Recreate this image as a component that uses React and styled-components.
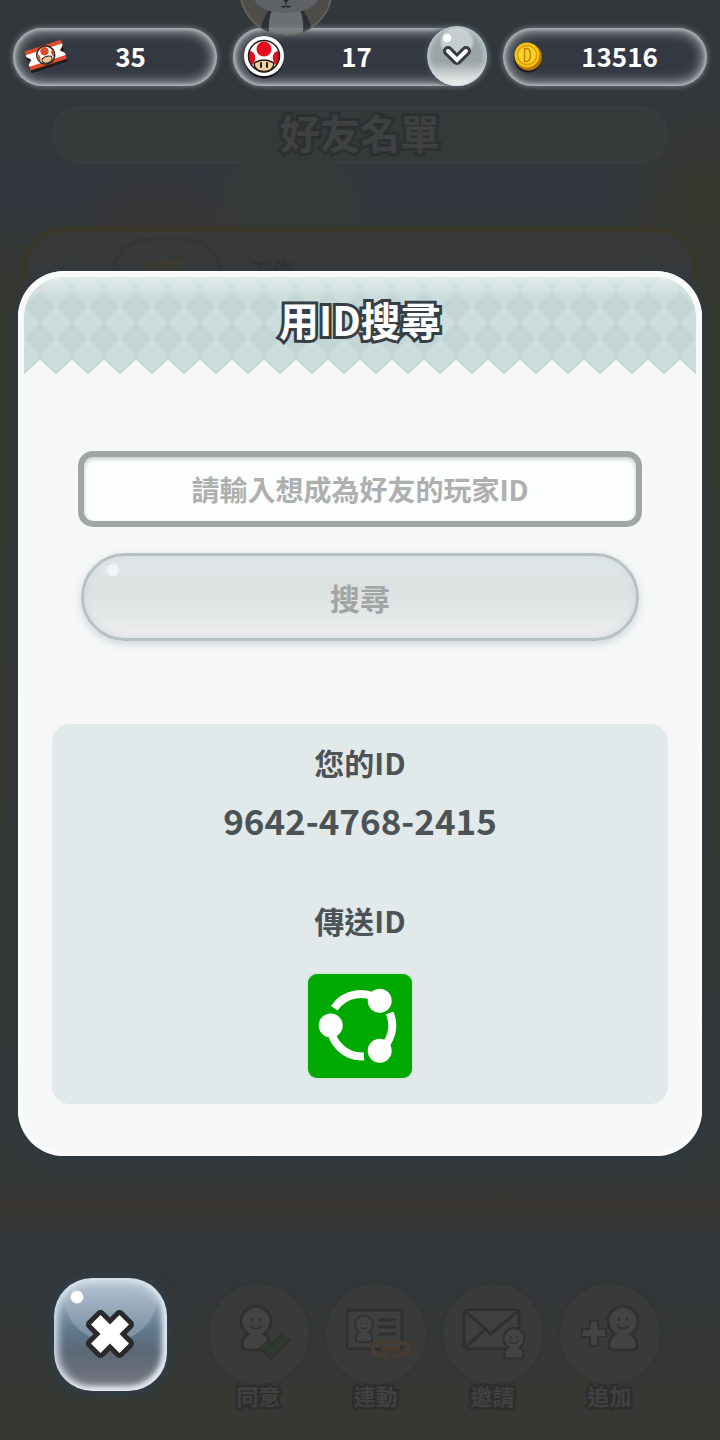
import { useState } from "react";
import styled, { createGlobalStyle } from "styled-components";

const actions = [
  { label: "同意", Icon: ApproveIcon },
  { label: "連動", Icon: LinkIcon },
  { label: "邀請", Icon: InviteIcon },
  { label: "追加", Icon: AddIcon },
];

export default function App() {
  const [friendId, setFriendId] = useState("");

  return (
    <>
      <GlobalStyle />
      <Screen>
        <FriendsPage>
          <PageTitle>好友名單</PageTitle>
          <FriendCard>
            <Avatar>
              <StarIcon />
            </Avatar>
            <FriendName>工作</FriendName>
          </FriendCard>
        </FriendsPage>

        <Foreground>
          <StatusBar>
            <Pill $end="24px">
              <TicketIcon />
              <Count>35</Count>
            </Pill>
            <Pill $end="0">
              <ToadIcon />
              <Count>17</Count>
              <RoundButton type="button" aria-label="展開">
                <ChevronIcon />
              </RoundButton>
            </Pill>
            <Pill $end="12px">
              <CoinIcon />
              <Count>13516</Count>
            </Pill>
          </StatusBar>
          <Mascot>
            <MascotIcon />
          </Mascot>

          <Dialog role="dialog" aria-labelledby="dialog-title">
            <DialogHeader>
              <HeaderPattern />
              <DialogTitle id="dialog-title">用ID搜尋</DialogTitle>
            </DialogHeader>
            <SearchForm onSubmit={(e) => e.preventDefault()}>
              <IdInput
                type="text"
                aria-label="玩家ID"
                placeholder="請輸入想成為好友的玩家ID"
                value={friendId}
                onChange={(e) => setFriendId(e.target.value)}
              />
              <SearchButton type="submit">搜尋</SearchButton>
            </SearchForm>
            <IdPanel>
              <PanelLabel>您的ID</PanelLabel>
              <PlayerId>9642-4768-2415</PlayerId>
              <PanelLabel>傳送ID</PanelLabel>
              <ShareButton type="button" aria-label="傳送ID">
                <ShareIcon />
              </ShareButton>
            </IdPanel>
          </Dialog>

          <BottomBar>
            <CloseButton type="button" aria-label="關閉">
              <CloseIcon />
            </CloseButton>
            <Actions>
              {actions.map(({ label, Icon }) => (
                <Action type="button" key={label}>
                  <ActionDisc>
                    <Icon />
                  </ActionDisc>
                  <ActionLabel>{label}</ActionLabel>
                </Action>
              ))}
            </Actions>
          </BottomBar>
        </Foreground>
      </Screen>
    </>
  );
}

function TicketIcon() {
  return (
    <svg width="44" height="42" viewBox="0 0 44 42" aria-hidden="true">
      <g transform="rotate(-18 22 21)">
        <path d="M3 15h38v5l-3 4 3 4v5H3v-6l3-4-3-4z" fill="#1d1d20" />
        <path d="M3 10h38v6l-4 4 4 4v6H3v-6l4-4-4-4z" fill="#dd4d2b" />
        <path d="M3 14h38v2l-4 4 4 4v2H3v-2l4-4-4-4z" fill="#fff" />
        <circle cx="22" cy="20" r="9" fill="#fff" stroke="#2b2624" strokeWidth="1.5" />
        <circle cx="22" cy="16" r="4.2" fill="#e04a25" />
        <path d="M14 17c2 0 3 4 1 7-2-2-2-5-1-7zM30 17c-2 0-3 4-1 7 2-2 2-5 1-7z" fill="#e04a25" />
        <path d="M17 23q5-3 10 0 1 5-5 5t-5-5z" fill="#efc592" stroke="#2b2624" />
      </g>
    </svg>
  );
}

function ToadIcon() {
  return (
    <svg width="42" height="46" viewBox="0 0 42 46" aria-hidden="true">
      <circle cx="20" cy="26" r="19.5" fill="#191b20" />
      <circle cx="20" cy="23" r="20" fill="#fff" />
      <path d="M6 18c6 1 7 10 2 14-4-4-5-9-2-14zM34 18c-6 1-7 10-2 14 4-4 5-9 2-14z" fill="#e60b1d" />
      <circle cx="20" cy="16" r="7.5" fill="#e60b1d" />
      <path d="M12 29q8-4 16 0 3 1 1 5-3 5-9 5t-9-5q-2-4 1-5z" fill="#f3cfa4" stroke="#241d1a" strokeWidth="1.5" />
      <path d="M17 30v4M23 30v4" stroke="#241d1a" strokeWidth="2" strokeLinecap="round" />
      <circle cx="20" cy="23" r="15.5" fill="none" stroke="#241d1a" strokeWidth="1.5" />
    </svg>
  );
}

function CoinIcon() {
  return (
    <svg width="30" height="36" viewBox="0 0 30 36" aria-hidden="true">
      <circle cx="14" cy="21" r="13.5" fill="#191b20" />
      <circle cx="14.5" cy="19" r="13.5" fill="#b87800" />
      <circle cx="13" cy="17" r="12.5" fill="#f7c60d" />
      <circle cx="13" cy="17" r="9.5" fill="#fbd62a" stroke="#e09a08" strokeWidth="1.5" />
      <path d="M10.500 10.500h3q3 1 3 6.500t-3 6.500h-3z" fill="#f9cf2e" stroke="#c98105" strokeWidth="1.500" />
    </svg>
  );
}

function ChevronIcon() {
  return (
    <svg width="34" height="26" viewBox="0 0 34 26" aria-hidden="true">
      <path d="M8 8l9 9 9-9" fill="none" stroke="#343a3e" strokeWidth="10" strokeLinecap="round" strokeLinejoin="round" />
      <path d="M8 8l9 9 9-9" fill="none" stroke="#fff" strokeWidth="4" strokeLinecap="round" />
    </svg>
  );
}

function MascotIcon() {
  return (
    <svg width="94" height="38" viewBox="0 0 94 38" aria-hidden="true">
      <circle cx="47" cy="-11" r="46" fill="#56534e" stroke="#706a5f" strokeWidth="2" />
      <path d="M32 8h30q8 9 10 20-12 7-25 7T22 28Q24 17 32 8z" fill="#2c2e30" />
      <path d="M33 10h28q4 9 3 22-8 3-17 3t-17-3q-1-13 3-22z" fill="#7a7d82" />
      <path d="M14-20h66q2 18-5 25-10 8-28 8T19 5q-7-7-5-25z" fill="#6b6e72" />
      <path d="M44-1h6l-3 4zM47 3v3M42 6q3 3 5 0q2 3 5 0" fill="#25272a" stroke="#25272a" strokeWidth="1" />
    </svg>
  );
}

function StarIcon() {
  return (
    <svg width="60" height="60" viewBox="0 0 60 60" aria-hidden="true">
      <path d="M24 4l8 4 16-2-6 16 4 20-18-8-20 8 4-20-6-12 12-1z" fill="#443c2c" />
    </svg>
  );
}

function HeaderPattern() {
  return (
    <PatternSvg aria-hidden="true">
      <defs>
        <pattern id="diamonds" y="14" width="32" height="32" patternUnits="userSpaceOnUse">
          <rect width="32" height="32" fill="#cbdddc" />
          <path d="M16 0l16 16-16 16L0 16z" fill="#c3d6d5" />
        </pattern>
        <pattern id="teeth" y="82" width="32" height="16" patternUnits="userSpaceOnUse">
          <path d="M0 0h16L0 15zM16 0h16v15z" fill="#cbdddc" />
          <path d="M0 14L15 0h2l15 14" fill="none" stroke="#c3d7d5" strokeWidth="2" />
        </pattern>
        <linearGradient id="fade" x1="0" y1="0" x2="0" y2="1">
          <stop offset="0" stopColor="#fff" stopOpacity="0.5" />
          <stop offset="1" stopColor="#fff" stopOpacity="0" />
        </linearGradient>
      </defs>
      <rect width="100%" height="82" fill="url(#diamonds)" />
      <rect y="82" width="100%" height="16" fill="url(#teeth)" />
      <rect width="100%" height="20" fill="url(#fade)" />
    </PatternSvg>
  );
}

function ShareIcon() {
  return (
    <svg width="104" height="104" viewBox="0 0 104 104" aria-hidden="true">
      <g fill="none" stroke="#fff" strokeWidth="8">
        <path d="M26.300 34.300A31.300 31.300 0 0 1 71.700 26.700" />
        <path d="M81.600 39A31.300 31.300 0 0 1 71.700 76.700" />
        <path d="M22.700 51.700A31.300 31.300 0 0 0 56 82.500" />
      </g>
      <g fill="#fff">
        <circle cx="71.700" cy="26.700" r="12" />
        <circle cx="22.700" cy="51.500" r="12" />
        <circle cx="71.700" cy="76.700" r="12" />
      </g>
    </svg>
  );
}

function CloseIcon() {
  return (
    <svg width="60" height="60" viewBox="-29 -29 60 60" aria-hidden="true">
      <path
        d="M-19-9.500L-9.500-19 0-9.500 9.500-19 19-9.500 9.500 0 19 9.500 9.500 19 0 9.500-9.500 19-19 9.500-9.500 0z"
        fill="#fff"
        stroke="#29292c"
        strokeWidth="10"
        strokeLinejoin="round"
        paintOrder="stroke"
      />
    </svg>
  );
}

function Person({ x, y, scale }) {
  return (
    <g transform={`translate(${x} ${y}) scale(${scale})`}>
      <path
        d="M-8 12A15 15 0 1 1 8 12Q14 16 14 23q0 5-5 5H-9q-5 0-5-5 0-7 6-11z"
        fill="#434343"
        stroke="#2f3030"
        strokeWidth="3"
      />
      <path d="M-4-4v3M4-4v3M-6 4q6 5 12 0" fill="none" stroke="#2f3030" strokeWidth="2" />
    </g>
  );
}

function ApproveIcon() {
  return (
    <svg width="100" height="100" viewBox="0 0 100 100" aria-hidden="true">
      <Person x={47} y={38} scale={1} />
      <path d="M54 60l8 8 16-16" fill="none" stroke="#2f3030" strokeWidth="12" />
      <path d="M54 60l8 8 16-16" fill="none" stroke="#303a31" strokeWidth="7" />
    </svg>
  );
}

function LinkIcon() {
  return (
    <svg width="100" height="100" viewBox="0 0 100 100" aria-hidden="true">
      <rect x="21" y="26" width="55" height="39" rx="3" fill="#3f3f40" stroke="#2f3030" strokeWidth="3" />
      <Person x={38} y={41} scale={0.6} />
      <path d="M52 36h18M52 43h18M52 50h18" stroke="#2f3030" strokeWidth="3" />
      <g fill="none" strokeLinecap="round" strokeWidth="4">
        <path d="M61 71h-8q-6 0-6-6t6-6h8M69 59h8q6 0 6 6t-6 6h-8" stroke="#463c31" />
        <path d="M57 65h16" stroke="#493a2f" />
      </g>
    </svg>
  );
}

function InviteIcon() {
  return (
    <svg width="100" height="100" viewBox="0 0 100 100" aria-hidden="true">
      <g fill="#3f3f40" stroke="#2f3030" strokeWidth="3">
        <rect x="21" y="26" width="55" height="39" rx="3" />
        <path d="M22 64l20-19M22 27l26 23 27-23" />
      </g>
      <Person x={71} y={55} scale={0.7} />
    </svg>
  );
}

function AddIcon() {
  return (
    <svg width="100" height="100" viewBox="0 0 100 100" aria-hidden="true">
      <path
        d="M31 38h6v8h8v6h-8v9h-6v-9h-8v-6h8z"
        fill="#444"
        stroke="#2f3030"
        strokeWidth="4"
        paintOrder="stroke"
      />
      <Person x={63} y={38} scale={1} />
    </svg>
  );
}

const GlobalStyle = createGlobalStyle`
  * {
    box-sizing: border-box;
  }
  body {
    margin: 0;
    background: #34383a;
    font-family: "Noto Sans CJK TC", "Noto Sans", sans-serif;
    font-weight: 700;
  }
  h1, h2, p {
    margin: 0;
    font-size: inherit;
  }
  button, input {
    font: inherit;
  }
  button {
    padding: 0;
    border: 0;
    background: none;
    cursor: pointer;
  }
  svg {
    display: block;
    flex: none;
  }
`;

const Screen = styled.main`
  display: grid;
  min-height: 100vh;
  overflow: hidden;
  background:
    radial-gradient(ellipse 90px 70px at 22% 230px, #383738 30%, transparent 100%),
    radial-gradient(ellipse 90px 90px at 40% 210px, #363a39 60%, transparent 100%),
    radial-gradient(ellipse 100px 110px at 98% 200px, #363830 20%, transparent 100%),
    linear-gradient(
      #32373b 0,
      #33373b 100px,
      #31373d 200px,
      #373831 290px,
      #363833 800px,
      #343839 1180px,
      #3a3733 1205px,
      #34373a 1235px,
      #333739 1290px,
      #363833 1400px
    );
`;

const FriendsPage = styled.section`
  grid-area: 1 / 1;
  display: flex;
  flex-direction: column;
  gap: 62px;
  padding: 106px 20px 320px;
`;

const PageTitle = styled.h1`
  margin: 0 32px;
  padding-bottom: 6px;
  border: 3px solid #383c3d;
  border-radius: 30px;
  background: #343939;
  color: #3e4141;
  font-size: 40px;
  line-height: 46px;
  text-align: center;
  -webkit-text-stroke: 6px #2d3031;
  paint-order: stroke fill;
`;

const FriendCard = styled.article`
  flex: 1;
  display: flex;
  align-items: flex-start;
  gap: 28px;
  padding: 6px 86px;
  border: 6px solid #3a372b;
  border-radius: 44px;
  background: #393939;
`;

const Avatar = styled.div`
  display: flex;
  justify-content: center;
  padding: 12px 22px;
  border: 3px solid #343536;
  border-radius: 36px;
`;

const FriendName = styled.p`
  padding-top: 14px;
  color: #303132;
  font-size: 22px;
  line-height: 32px;
`;

const Foreground = styled.div`
  grid-area: 1 / 1;
  position: relative;
  display: flex;
  flex-direction: column;
`;

const StatusBar = styled.header`
  display: grid;
  grid-template-columns: 204fr 254fr 204fr;
  gap: 16px;
  padding: 28px 13px 0;
`;

const Pill = styled.div`
  display: flex;
  align-items: center;
  height: 58px;
  padding: 0 ${(props) => props.$end} 2px 11px;
  border-radius: 29px;
  background: #333842;
  box-shadow:
    inset 0 0 3px 2px #a9afb2,
    inset 0 0 12px 4px #a3a6a8,
    0 0 5px 1px #6c777e;
`;

const Count = styled.span`
  flex: 1;
  color: #fff;
  font-size: 26px;
  line-height: 32px;
  text-align: center;
`;

const RoundButton = styled.button`
  display: grid;
  place-items: center;
  width: 60px;
  height: 60px;
  border-radius: 50%;
  background:
    radial-gradient(circle 5px at 20px 12px, #fff 70%, transparent 100%),
    radial-gradient(ellipse 18px 16px at 50% 16px, #c6cdd0 80%, transparent 100%),
    linear-gradient(#95a2a7, #9ca4a6 60%, #fafcfc);
  box-shadow:
    inset 0 0 6px 1px #cfdadd,
    0 0 5px 1px #43535c;
`;

const Mascot = styled.div`
  position: absolute;
  top: 0;
  left: calc(50% - 121px);
  opacity: 0.8;
`;

const Dialog = styled.section`
  margin: 185px 18px 0;
  padding: 6px 6px 52px;
  border-radius: 46px;
  background: #f6f8f7;
  box-shadow:
    inset 0 0 4px 3px #fcfdfd,
    0 0 16px 3px #2e3a40;
`;

const DialogHeader = styled.header`
  position: relative;
  overflow: hidden;
  height: 98px;
  border-radius: 40px 40px 0 0;
`;

const PatternSvg = styled.svg`
  position: absolute;
  inset: 0;
  width: 100%;
  height: 100%;
`;

const DialogTitle = styled.h2`
  position: relative;
  padding-top: 16px;
  color: #fff;
  font-size: 40px;
  line-height: 52px;
  text-align: center;
  -webkit-text-stroke: 6px #363f46;
  paint-order: stroke fill;
`;

const SearchForm = styled.form`
  display: flex;
  flex-direction: column;
  gap: 26px;
  padding: 76px 54px 0;
`;

const IdInput = styled.input`
  width: 100%;
  height: 76px;
  border: 6px solid #a0a6a5;
  border-radius: 15px;
  background: #fdfefe;
  box-shadow: inset 0 2px 4px #c4c9c8;
  color: #4b5356;
  font-size: 28px;
  text-align: center;

  &::placeholder {
    color: #adb0af;
    opacity: 1;
  }
`;

const SearchButton = styled.button`
  height: 88px;
  margin: 0 3px;
  border: 3px solid #b7c1c4;
  border-radius: 44px;
  background:
    radial-gradient(circle 7px at 29px 14px, #f3f6f6 70%, transparent 100%),
    linear-gradient(#e2e9ea, #dce1e1 40%, #e3e7e8 70%, #efefef);
  box-shadow:
    inset 0 0 6px 1px #d3dbdd,
    0 3px 8px #cbd5dc;
  color: #a3a5a5;
  font-size: 30px;
`;

const IdPanel = styled.section`
  display: flex;
  flex-direction: column;
  align-items: center;
  margin: 83px 28px 0;
  padding: 18px 0 26px;
  border-radius: 18px;
  background: #e2e9eb;
`;

const PanelLabel = styled.p`
  color: #4b5356;
  font-size: 30px;
  line-height: 40px;
`;

const PlayerId = styled.p`
  margin: 14px 0 56px;
  color: #4b5356;
  font-size: 35px;
  line-height: 48px;
`;

const ShareButton = styled.button`
  margin-top: 34px;
  border-radius: 9px;
  background: #00a900;
  box-shadow: 0 0 3px #b5d6b8;
`;

const BottomBar = styled.footer`
  display: flex;
  align-items: flex-start;
  gap: 33px;
  padding: 122px 52px 24px 54px;
`;

const CloseButton = styled.button`
  display: grid;
  place-items: center;
  flex: none;
  width: 113px;
  height: 113px;
  border-radius: 38px;
  background:
    radial-gradient(circle 7px at 23px 19px, #fff 80%, transparent 100%),
    radial-gradient(ellipse 47px 44px at 50% 20px, #b3c3d166 96%, transparent 100%),
    linear-gradient(#b9c8d7, #60788d 45%, #5b6876 65%, #77757e);
  box-shadow:
    inset 0 0 8px 4px #dfe7ee,
    inset -3px -3px 5px #e9efef,
    0 0 12px 3px #2d3f4e;
`;

const Actions = styled.nav`
  flex: 1;
  display: grid;
  grid-template-columns: repeat(4, 1fr);
  padding-top: 6px;
`;

const Action = styled.button`
  display: flex;
  flex-direction: column;
  align-items: center;
`;

const ActionDisc = styled.span`
  border-radius: 50%;
  background: #393a39;
  box-shadow: 0 0 4px #313434;
`;

const ActionLabel = styled.span`
  color: #404141;
  font-size: 22px;
  line-height: 22px;
  -webkit-text-stroke: 5px #2d2f2f;
  paint-order: stroke fill;
`;
